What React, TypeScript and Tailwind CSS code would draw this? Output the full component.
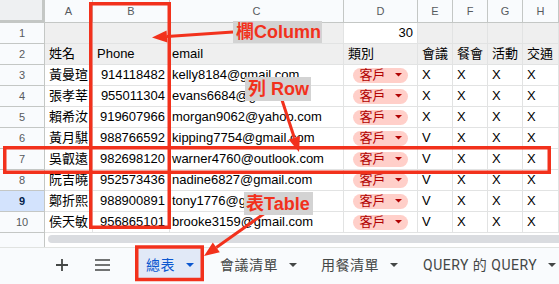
import React from 'react';

const cellFont = "font-['Liberation_Sans','Noto_Sans_CJK_TC',sans-serif]";
const grid = 'grid grid-cols-[45px_48px_77px_174px_74px_35px_35px_35px_36px]';

const rows = [
  { n: 3, name: '黃曼瑄', phone: '914118482', email: 'kelly8184@gmail.com', e: 'X' },
  { n: 4, name: '張孝莘', phone: '955011304', email: 'evans6684@gmail.com', e: 'X' },
  { n: 5, name: '賴希汝', phone: '919607966', email: 'morgan9062@yahoo.com', e: 'X' },
  { n: 6, name: '黃月騏', phone: '988766592', email: 'kipping7754@gmail.com', e: 'V' },
  { n: 7, name: '吳叡遠', phone: '982698120', email: 'warner4760@outlook.com', e: 'V' },
  { n: 8, name: '阮吉曉', phone: '952573436', email: 'nadine6827@gmail.com', e: 'V' },
  { n: 9, name: '鄭折熙', phone: '988900891', email: 'tony1776@gmail.com', e: 'V' },
  { n: 10, name: '侯天敏', phone: '956865101', email: 'brooke3159@gmail.com', e: 'V' },
];

const Cell: React.FC<{ className?: string; children?: React.ReactNode }> = ({ className = '', children }) => (
  <div className={`h-[21px] border-r border-b border-[#e2e3e3] overflow-hidden whitespace-nowrap flex items-center px-[4px] text-[13px] text-black ${className}`}>
    {children}
  </div>
);

const RowNum: React.FC<{ n: number; active?: boolean }> = ({ n, active }) => (
  <div
    className={`h-[21px] border-r border-b border-[#c4c7c5] flex items-center justify-center text-[11px] ${
      active ? 'bg-[#d3e3fd] text-[#041e49] font-bold' : 'bg-[#f9fbfd] text-[#575a5e]'
    }`}
  >
    {n}
  </div>
);

const Caret: React.FC<{ color: string; w?: number }> = ({ color, w = 8 }) => (
  <svg width={w} height={w / 2} viewBox="0 0 8 4">
    <polygon points="0,0 8,0 4,4" fill={color} />
  </svg>
);

const Chip = () => (
  <div className="flex items-center gap-[9px] h-[15px] pl-[6px] pr-[6px] rounded-full bg-[#ffcfc9] text-[#b10202] text-[13px]">
    <span>客戶</span>
    <Caret color="#b10202" w={7} />
  </div>
);

const Tab: React.FC<{ label: string; active?: boolean; className?: string }> = ({ label, active, className = '' }) => (
  <div
    className={`flex items-center h-[32px] mt-[1px] gap-[11px] text-[14px] tracking-[0.5px] ${
      active ? 'bg-[#e1e9f7] text-[#0b57d0]' : 'text-[#444746]'
    } ${className}`}
  >
    <span>{label}</span>
    <Caret color={active ? '#0b57d0' : '#444746'} />
  </div>
);

export default function App() {
  return (
    <div className={`relative w-[559px] h-[284px] overflow-hidden bg-white ${cellFont}`}>
      {/* column headers */}
      <div className={`${grid} h-[23px]`}>
        <div className="bg-[#eef0f2] border-r-[3px] border-b-[3px] border-[#c4c7c5]" />
        {['A', 'B', 'C', 'D', 'E', 'F', 'G', 'H'].map((l) => (
          <div key={l} className="bg-[#f9fbfd] border-r border-b border-[#c4c7c5] flex items-center justify-center text-[11px] text-[#575a5e]">
            {l}
          </div>
        ))}
      </div>

      {/* row 1 */}
      <div className={grid}>
        <RowNum n={1} />
        <Cell className="bg-[#efefef]" />
        <Cell className="bg-[#efefef]" />
        <Cell className="bg-[#efefef]" />
        <Cell className="justify-end">30</Cell>
        <Cell className="bg-[#efefef]" />
        <Cell className="bg-[#efefef]" />
        <Cell className="bg-[#efefef]" />
        <Cell className="bg-[#efefef]" />
      </div>

      {/* row 2 */}
      <div className={grid}>
        <RowNum n={2} />
        <Cell className="bg-[#efefef]">姓名</Cell>
        <Cell className="bg-[#efefef]">Phone</Cell>
        <Cell className="bg-[#efefef] pl-[2px]">email</Cell>
        <Cell className="bg-[#efefef]">類別</Cell>
        <Cell className="bg-[#efefef]">會議</Cell>
        <Cell className="bg-[#efefef]">餐會</Cell>
        <Cell className="bg-[#efefef]">活動</Cell>
        <Cell className="bg-[#efefef]">交通</Cell>
      </div>

      {rows.map((r) => (
        <div key={r.n} className={grid}>
          <RowNum n={r.n} active={r.n === 9} />
          <Cell>{r.name}</Cell>
          <Cell className="justify-end">{r.phone}</Cell>
          <Cell className="pl-[2px]">{r.email}</Cell>
          <Cell className="justify-center px-0">
            <Chip />
          </Cell>
          <Cell>{r.e}</Cell>
          <Cell>X</Cell>
          <Cell>X</Cell>
          <Cell>X</Cell>
        </div>
      ))}

      {/* scrollbar strip */}
      <div className="flex h-[14px]">
        <div className="w-[45px] border-r border-[#c4c7c5] bg-[#f9fbfd]" />
        <div className="flex-1 pl-[3px] pt-[2px]">
          <div className="h-[8px] rounded-l-full bg-[#dadce0]" />
        </div>
      </div>

      {/* sheet tabs */}
      <div className="flex items-start h-[37px] bg-[#f9fbfd] border-t border-[#e1e3e1] pl-[46px] font-['Roboto','Noto_Sans_CJK_TC',sans-serif]">
        <div className="w-[32px] h-[34px] flex items-center justify-center text-[#444746]">
          <svg width="14" height="14" viewBox="0 0 14 14">
            <path d="M7 1v12M1 7h12" stroke="currentColor" strokeWidth="1.8" />
          </svg>
        </div>
        <div className="w-[32px] h-[34px] ml-[8px] flex items-center justify-center text-[#444746]">
          <svg width="15" height="12" viewBox="0 0 15 12">
            <path d="M0 1h15M0 6h15M0 11h15" stroke="currentColor" strokeWidth="1.6" />
          </svg>
        </div>
        <Tab label="總表" active className="ml-[19px] pl-[9px] pr-[10px]" />
        <Tab label="會議清單" className="pl-[16px] pr-[10px]" />
        <Tab label="用餐清單" className="pl-[14px] pr-[9px]" />
        <Tab label="QUERY 的 QUERY" className="pl-[16px]" />
      </div>

      {/* annotations */}
      <svg className="absolute inset-0 pointer-events-none" width="559" height="284">
        <g fill="none" stroke="#f2311c" strokeWidth="3.5">
          <rect x="90.75" y="3.75" width="78.5" height="223.5" />
          <rect x="4.75" y="147.75" width="544.5" height="24.5" />
          <rect x="136.75" y="247" width="65.5" height="32.5" />
        </g>
        <g stroke="#f2311c" strokeWidth="3" fill="#f2311c">
          <line x1="233" y1="32" x2="167" y2="36.5" />
          <polygon points="152,37.5 167.4,42.5 166.6,30.5" stroke="none" />
          <line x1="282" y1="100" x2="294.3" y2="137.7" />
          <polygon points="299,152 288.6,139.6 300,135.9" stroke="none" />
          <line x1="265" y1="213" x2="216.3" y2="247.4" />
          <polygon points="204,256 212.8,242.5 219.8,252.3" stroke="none" />
        </g>
      </svg>

      <div className="absolute left-[233px] top-[21px] w-[89px] h-[22px] bg-[#d3d3d3] flex items-center pl-[3px] text-[18px] font-bold text-[#f2311c] leading-none">
        欄Column
      </div>
      <div className="absolute left-[245px] top-[77px] w-[66px] h-[24px] bg-[#d3d3d3] flex items-center pl-[3px] text-[18px] font-bold text-[#f2311c] leading-none">
        列 Row
      </div>
      <div className="absolute left-[244px] top-[192px] w-[69px] h-[23px] bg-[#d3d3d3] flex items-center pl-[2px] text-[18px] font-bold text-[#f2311c] leading-none">
        表Table
      </div>
    </div>
  );
}
